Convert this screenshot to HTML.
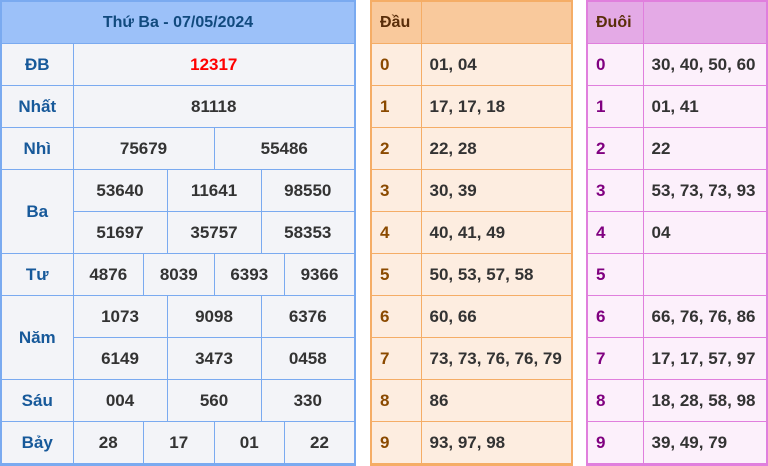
<!DOCTYPE html>
<html><head><meta charset="utf-8"><style>
body{margin:0;width:768px;height:466px;background:#fff;font-family:"Liberation Sans",Arial,sans-serif;font-weight:bold;font-size:17px;position:relative;overflow:hidden}
table{border-collapse:collapse;table-layout:fixed;position:absolute;top:0}
td{padding:0;height:41px;text-align:center;color:#333}
#L{left:0;width:356px;border:2px solid #7aaaf0;border-bottom-width:3px;background:#f3f4f8}
#L td{border:1px solid #7aaaf0}
#L .h{background:#9cc1f9;color:#114a7e;height:41px;font-size:16px}
#L .lb{color:#17599a}
#L .r{color:#f00}
#M{left:370px;width:203px;border:2px solid #f5ad66;border-bottom-width:3px;background:#fdede0}
#M td{border:1px solid #f5ad66;text-align:left;padding-left:8px}
#M .h{background:#f9c99c;color:#5a2e0a;font-size:16px}
#M .d{color:#8b4a00}
#R{left:586px;width:182px;border:2px solid #e07fdd;border-bottom-width:3px;background:#fcf0fb}
#R td{border:1px solid #e07fdd;text-align:left;padding-left:8px}
#R .h{background:#e4aae6;color:#5a2e0a;font-size:16px}
#R .d{color:#800080}
</style></head><body>
<table id="L">
<colgroup><col style="width:72px"><col span="12"></colgroup>
<tr><td class="h" colspan="13">Thứ Ba - 07/05/2024</td></tr>
<tr><td class="lb">ĐB</td><td colspan="12" class="r">12317</td></tr>
<tr><td class="lb">Nhất</td><td colspan="12">81118</td></tr>
<tr><td class="lb">Nhì</td><td colspan="6">75679</td><td colspan="6">55486</td></tr>
<tr><td class="lb" rowspan="2">Ba</td><td colspan="4">53640</td><td colspan="4">11641</td><td colspan="4">98550</td></tr>
<tr><td colspan="4">51697</td><td colspan="4">35757</td><td colspan="4">58353</td></tr>
<tr><td class="lb">Tư</td><td colspan="3">4876</td><td colspan="3">8039</td><td colspan="3">6393</td><td colspan="3">9366</td></tr>
<tr><td class="lb" rowspan="2">Năm</td><td colspan="4">1073</td><td colspan="4">9098</td><td colspan="4">6376</td></tr>
<tr><td colspan="4">6149</td><td colspan="4">3473</td><td colspan="4">0458</td></tr>
<tr><td class="lb">Sáu</td><td colspan="4">004</td><td colspan="4">560</td><td colspan="4">330</td></tr>
<tr><td class="lb">Bảy</td><td colspan="3">28</td><td colspan="3">17</td><td colspan="3">01</td><td colspan="3">22</td></tr>
</table>
<table id="M">
<colgroup><col style="width:50px"><col></colgroup>
<tr><td class="h">Đầu</td><td class="h"></td></tr>
<tr><td class="d">0</td><td>01, 04</td></tr>
<tr><td class="d">1</td><td>17, 17, 18</td></tr>
<tr><td class="d">2</td><td>22, 28</td></tr>
<tr><td class="d">3</td><td>30, 39</td></tr>
<tr><td class="d">4</td><td>40, 41, 49</td></tr>
<tr><td class="d">5</td><td>50, 53, 57, 58</td></tr>
<tr><td class="d">6</td><td>60, 66</td></tr>
<tr><td class="d">7</td><td>73, 73, 76, 76, 79</td></tr>
<tr><td class="d">8</td><td>86</td></tr>
<tr><td class="d">9</td><td>93, 97, 98</td></tr>
</table>
<table id="R">
<colgroup><col style="width:56px"><col></colgroup>
<tr><td class="h">Đuôi</td><td class="h"></td></tr>
<tr><td class="d">0</td><td>30, 40, 50, 60</td></tr>
<tr><td class="d">1</td><td>01, 41</td></tr>
<tr><td class="d">2</td><td>22</td></tr>
<tr><td class="d">3</td><td>53, 73, 73, 93</td></tr>
<tr><td class="d">4</td><td>04</td></tr>
<tr><td class="d">5</td><td></td></tr>
<tr><td class="d">6</td><td>66, 76, 76, 86</td></tr>
<tr><td class="d">7</td><td>17, 17, 57, 97</td></tr>
<tr><td class="d">8</td><td>18, 28, 58, 98</td></tr>
<tr><td class="d">9</td><td>39, 49, 79</td></tr>
</table>
</body></html>
